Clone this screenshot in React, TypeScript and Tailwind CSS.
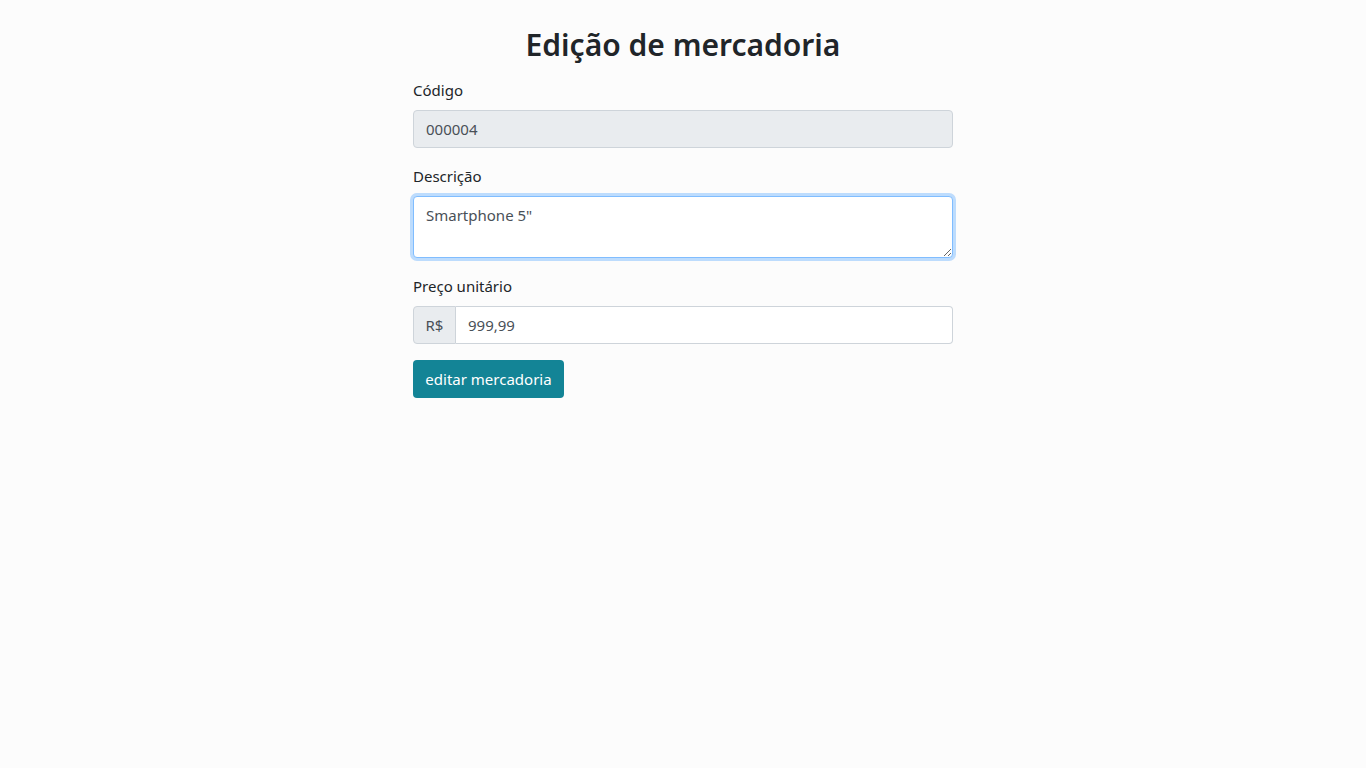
import React from "react";

export default function App() {
  const font = { fontFamily: '"Noto Sans", "Open Sans", sans-serif' };
  return (
    <div className="min-h-screen w-full bg-[#fcfcfc] text-[#212529]" style={font}>
      <div className="mx-auto w-[540px] pt-[26px]">
        <h2 className="mb-[14px] text-center text-[30px] font-semibold leading-[38px] text-[#212529]">
          Edição de mercadoria
        </h2>
        <form>
          <div className="mb-4">
            <label className="mb-2 block text-[15px] leading-6">Código</label>
            <input
              type="text"
              value="000004"
              disabled
              readOnly
              className="block h-[38px] w-full rounded border border-[#ced4da] bg-[#e9ecef] px-3 text-[15px] text-[#495057] outline-none"
            />
          </div>
          <div className="mb-4">
            <label className="mb-2 block text-[15px] leading-6">Descrição</label>
            <textarea
              rows={2}
              defaultValue={'Smartphone 5"'}
              className="block h-[62px] w-full rounded border border-[#80bdff] bg-white px-3 py-[6px] text-[15px] leading-6 text-[#495057] shadow-[0_0_0_3px_rgba(0,123,255,0.25)] outline-none"
            />
          </div>
          <div className="mb-4">
            <label className="mb-2 block text-[15px] leading-6">Preço unitário</label>
            <div className="flex h-[38px] w-full">
              <span className="flex w-[43px] items-center justify-center rounded-l border border-[#ced4da] bg-[#e9ecef] text-[15px] text-[#495057]">
                R$
              </span>
              <input
                type="text"
                defaultValue="999,99"
                className="block h-[38px] flex-1 rounded-r border border-l-0 border-[#ced4da] bg-white px-3 text-[15px] text-[#495057] outline-none"
              />
            </div>
          </div>
          <button
            type="button"
            className="h-[38px] w-[151px] rounded bg-[#138496] text-[15px] text-white"
          >
            editar mercadoria
          </button>
        </form>
      </div>
    </div>
  );
}
